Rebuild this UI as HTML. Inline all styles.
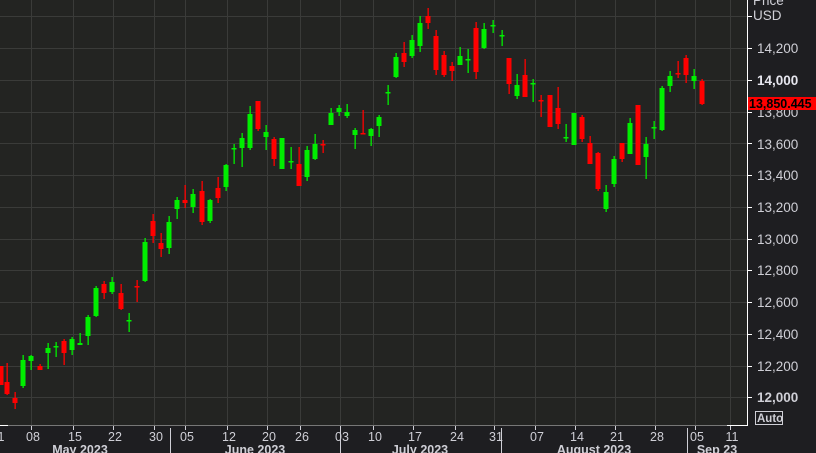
<!DOCTYPE html>
<html><head><meta charset="utf-8"><style>
html,body{margin:0;padding:0;background:#1e1e21;width:816px;height:453px;overflow:hidden}
svg{display:block}
text{font-family:"Liberation Sans",sans-serif}
</style></head><body>
<svg id="c" width="816" height="453" xmlns="http://www.w3.org/2000/svg">
<rect x="0" y="0" width="816" height="453" fill="#1e1e21"/>
<rect x="0" y="0" width="747" height="425" fill="#232422"/>
<g id="grid" stroke="#3a3b39" stroke-width="1"></g>
<g id="cand"></g>
<g fill="#cfcfd6" font-size="13.5">
<text x="753" y="5">Price</text>
<text x="753" y="20">USD</text>
<text x="757" y="53">14,200</text>
<text x="757" y="85" font-weight="bold" fill="#e6e6ee">14,000</text>
<text x="757" y="117">13,800</text>
<text x="757" y="149">13,600</text>
<text x="757" y="180">13,400</text>
<text x="757" y="212">13,200</text>
<text x="757" y="244">13,000</text>
<text x="757" y="275">12,800</text>
<text x="757" y="307">12,600</text>
<text x="757" y="339">12,400</text>
<text x="757" y="371">12,200</text>
<text x="757" y="402" font-weight="bold">12,000</text>
</g>
<rect x="747" y="97" width="69" height="13" fill="#ff0000"/>
<text x="749" y="108" font-size="12.5" font-weight="bold" fill="#000">13,850.445</text>
<rect x="755.5" y="411.5" width="27" height="13" fill="none" stroke="#cfcfd6"/>
<text x="757" y="422" font-size="11.5" font-weight="bold" fill="#cfcfd6">Auto</text>
<line x1="747.5" y1="0" x2="747.5" y2="426" stroke="#fff"/>
<line x1="0" y1="425.5" x2="747" y2="425.5" stroke="#777"/>
<line x1="0" y1="425.5" x2="8" y2="425.5" stroke="#fff"/>
<line x1="727" y1="425.5" x2="748" y2="425.5" stroke="#fff"/>
<g id="ticks" stroke="#fff"></g>
<g fill="#cfcfd6" font-size="12.5" text-anchor="middle" id="dl"></g>
<g fill="#cfcfd6" font-size="12.5" font-weight="bold" text-anchor="middle">
<text x="80" y="454">May 2023</text>
<text x="255" y="454">June 2023</text>
<text x="420" y="454">July 2023</text>
<text x="594" y="454">August 2023</text>
<text x="717" y="454">Sep 23</text>
</g>
<g stroke="#cfcfd6">
<line x1="170.5" y1="428" x2="170.5" y2="453"/>
<line x1="340.5" y1="428" x2="340.5" y2="453"/>
<line x1="501.5" y1="428" x2="501.5" y2="453"/>
<line x1="687.5" y1="428" x2="687.5" y2="453"/>
</g>
</svg>
<script>
var NS="http://www.w3.org/2000/svg";
function el(p,t,a){var e=document.createElementNS(NS,t);for(var k in a)e.setAttribute(k,a[k]);document.getElementById(p).appendChild(e);return e;}
var hy=[16,48,80,112,143,175,207,239,270,302,334,366,397];
hy.forEach(function(y){el("grid","line",{x1:0,x2:747,y1:y+.5,y2:y+.5});el("ticks","line",{x1:747,x2:752,y1:y+.5,y2:y+.5});});
var vx=[[31,"08"],[73,"15"],[113,"22"],[154,"30"],[185,"05"],[227,"12"],[267,"20"],[300,"26"],[340,"03"],[373,"10"],[413,"17"],[455,"24"],[494,"31"],[535,"07"],[575,"14"],[615,"21"],[655,"28"],[695,"05"],[730,"11"]];
vx.forEach(function(v){if(v[0]<747)el("grid","line",{x1:v[0]+.5,x2:v[0]+.5,y1:0,y2:425});el("ticks","line",{x1:v[0]+.5,x2:v[0]+.5,y1:426,y2:430,stroke:"#cfcfd6"});var t=el("dl","text",{x:v[0]+2,y:441});t.textContent=v[1];});
el("dl","text",{x:1,y:441}).textContent="1";
var C=[
[1,366,366,385,385,"r"],[7,363,382,394,395,"r"],[15,392,398,403,409,"r"],[23,355,360,386,388,"g"],[31,355,356,361,370,"g"],
[40,364,366,370,370,"r"],[48,343,348,353,369,"g"],[56,342,346,347,357,"g"],[64,339,341,353,365,"r"],[72,337,339,350,355,"g"],
[80,333,343,345,345,"g"],[88,315,317,336,345,"g"],[96,286,288,316,317,"g"],[104,281,284,293,299,"r"],[112,277,282,292,294,"g"],
[121,284,293,309,310,"r"],[129,313,320,321,332,"g"],[137,280,286,287,302,"r"],[145,238,242,281,282,"g"],[153,214,221,236,243,"r"],
[161,233,243,249,257,"r"],[169,216,222,248,254,"g"],[177,197,200,209,219,"g"],[185,185,200,203,208,"r"],[193,189,194,207,213,"g"],
[202,181,191,222,225,"r"],[210,199,200,221,223,"g"],[218,177,188,198,203,"r"],[226,164,165,187,191,"g"],[234,144,148,149,164,"g"],
[242,133,138,148,167,"g"],[250,106,114,148,150,"g"],[258,101,101,129,131,"r"],[266,125,132,137,150,"g"],[274,137,139,159,166,"r"],
[282,138,138,169,169,"g"],[291,147,161,162,169,"g"],[299,147,164,186,186,"r"],[307,146,150,177,181,"g"],[315,134,144,159,160,"g"],
[323,140,144,145,153,"r"],[331,108,113,125,125,"g"],[339,105,108,112,116,"g"],[347,104,112,116,118,"g"],[355,128,130,135,149,"g"],
[363,110,133,134,134,"r"],[371,128,129,136,146,"g"],[379,115,117,126,137,"g"],[388,85,92,93,105,"g"],[396,53,57,77,78,"g"],
[404,42,53,62,67,"r"],[412,35,40,56,58,"g"],[420,16,23,46,52,"g"],[428,8,16,23,29,"r"],[436,30,36,70,75,"r"],
[444,51,55,75,77,"r"],[452,62,66,71,81,"r"],[460,47,56,65,65,"g"],[468,49,59,60,73,"g"],[476,22,28,72,79,"r"],
[484,23,29,48,49,"g"],[493,20,25,26,33,"g"],[502,30,35,36,46,"g"],[509,58,58,84,94,"r"],[517,74,85,96,99,"g"],
[525,59,75,97,97,"r"],[533,79,83,84,102,"g"],[541,95,100,101,117,"r"],[550,95,95,127,127,"r"],[558,87,108,124,129,"r"],
[566,124,137,138,142,"g"],[574,113,113,145,145,"g"],[582,115,117,139,142,"r"],[590,136,143,164,164,"r"],[598,152,153,189,191,"r"],
[606,185,192,209,212,"g"],[614,156,159,184,187,"g"],[622,143,143,159,162,"r"],[630,118,123,154,154,"g"],[638,105,105,165,165,"r"],
[646,137,144,157,179,"g"],[654,121,127,128,139,"g"],[662,86,88,130,131,"g"],[670,71,76,86,92,"g"],[678,61,73,74,78,"r"],
[686,55,58,75,83,"r"],[694,69,76,81,89,"g"],[702,79,81,104,105,"r"]];
C.forEach(function(c){var col=c[5]=="g"?"#00ee00":"#ff0000";
el("cand","rect",{x:c[0]-0.5,y:c[1],width:1.3,height:Math.max(1,c[4]-c[1]),fill:col});
el("cand","rect",{x:c[0]-2.5,y:c[2],width:5,height:Math.max(1.5,c[3]-c[2]),fill:col});});
</script>
</body></html>
